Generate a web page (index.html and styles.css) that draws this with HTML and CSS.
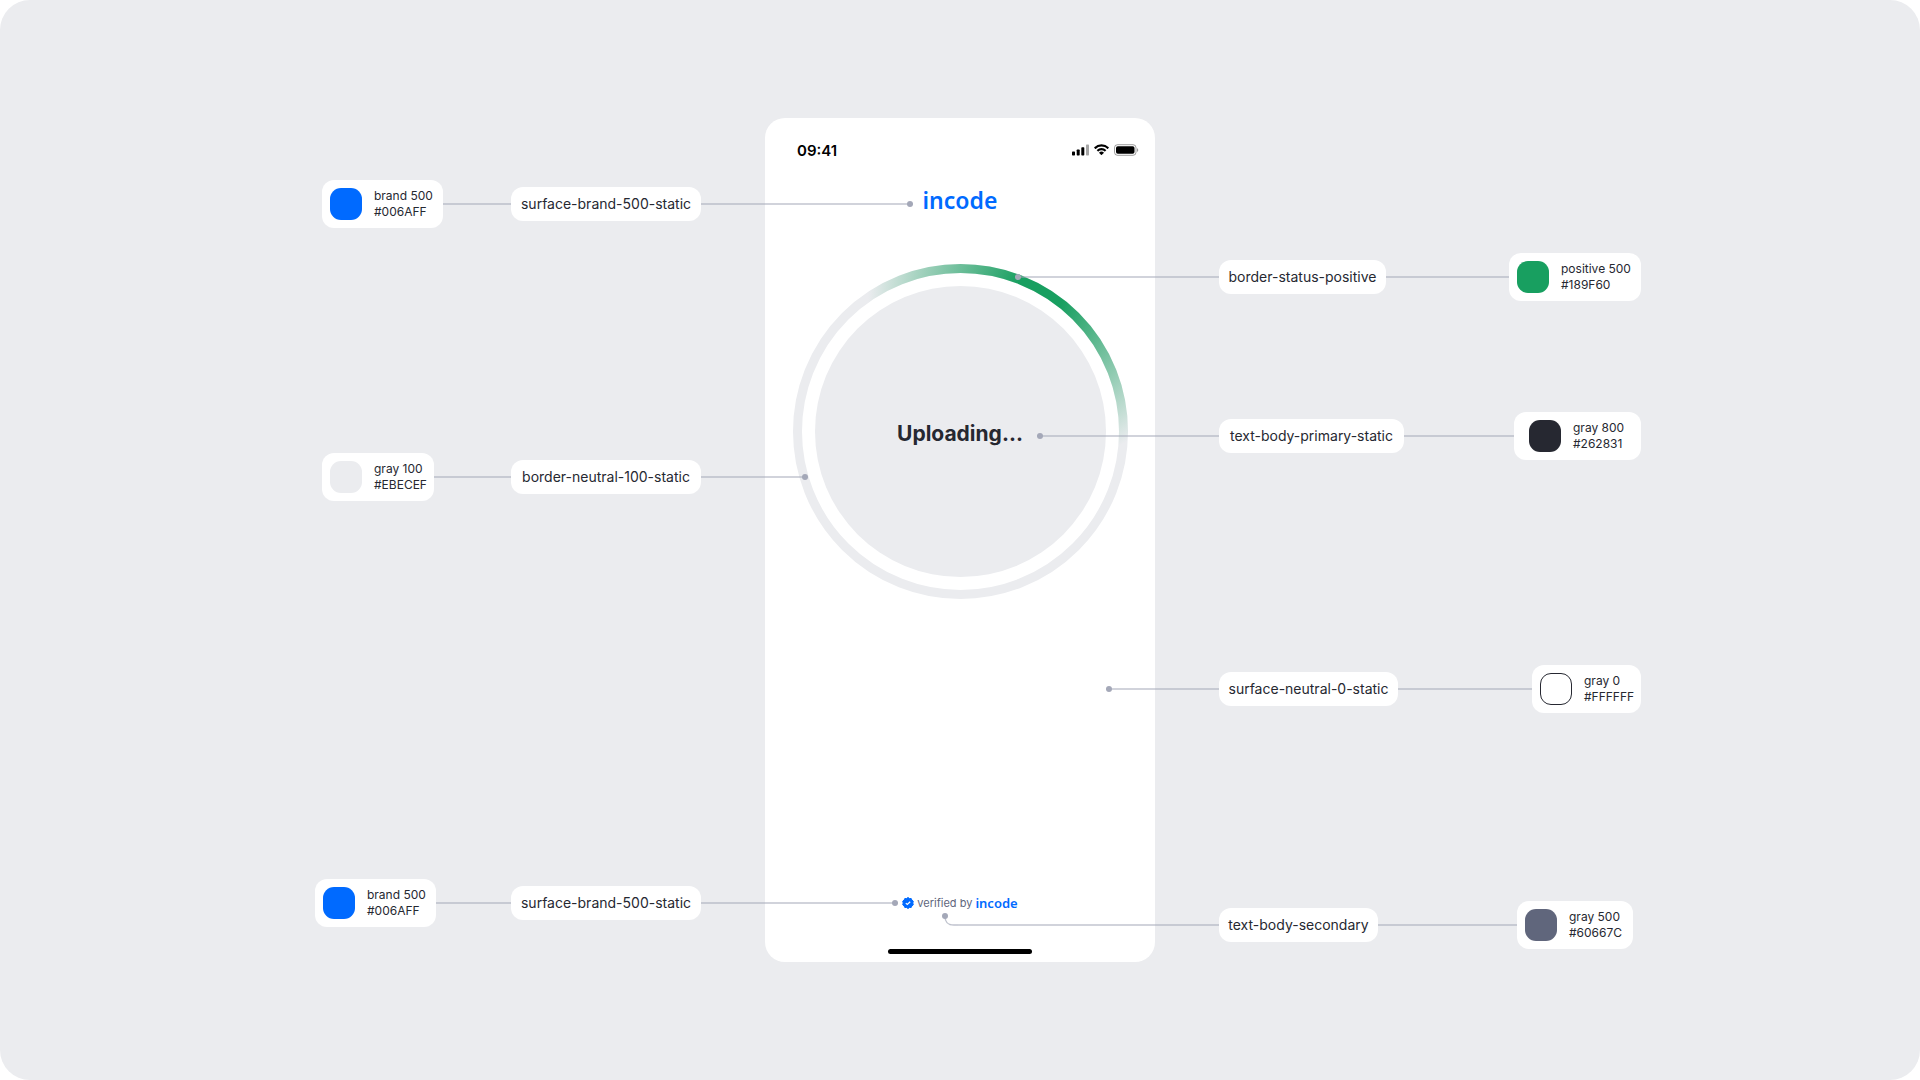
FILE: index.html
```html
<!DOCTYPE html>
<html lang="en">
<head>
<meta charset="utf-8">
<meta name="viewport" content="width=device-width, initial-scale=1">
<title>Incode – Uploading screen color tokens</title>
<link rel="stylesheet" href="styles.css">
</head>
<body>
<main class="board">
  <div class="diagram">
    <section class="phone" aria-label="Uploading screen">
      <header class="status">
        <time class="status-time">09:41</time>
        <svg class="status-icons" width="66" height="12" viewBox="0 0 66 12" aria-hidden="true">
          <rect x="0" y="7.5" width="3" height="4" rx=".7"/>
          <rect x="4.7" y="5.5" width="3" height="6" rx=".7"/>
          <rect x="9.3" y="3.2" width="3" height="8.3" rx=".7"/>
          <rect x="14" y=".5" width="3" height="11" rx=".7" opacity=".35"/>
          <path d="M29.500 2.600c2.100 0 4.200.8 5.800 2.300.1.1.3.1.4 0l1.100-1.200c.1-.1.1-.3 0-.5a10.500 10.500 0 0 0-14.600 0c-.1.1-.1.300 0 .5l1.100 1.200c.1.1.3.1.4 0a8.400 8.400 0 0 1 5.800-2.300zm0 3.700c1.200 0 2.300.4 3.100 1.200.1.1.3.1.4 0l1.200-1.200c.1-.1.1-.3 0-.4a6.800 6.800 0 0 0-9.400 0c-.1.1-.1.300 0 .4l1.200 1.200c.1.1.3.1.4 0 .8-.8 1.900-1.200 3.100-1.200zm2.300 2.700c.1-.1.1-.3 0-.4a3.500 3.500 0 0 0-4.600 0c-.1.1-.1.300 0 .4l2 2.100c.1.1.3.1.4 0z"/>
          <rect x="42.500" y=".7" width="21.500" height="10.600" rx="3" fill="none" stroke="#000" opacity=".38"/>
          <rect x="44" y="2.200" width="18.500" height="7.600" rx="1.800"/>
          <path d="M65 4.200v3.800c.8-.3 1.200-1 1.200-1.900s-.4-1.600-1.200-1.900z" opacity=".4"/>
        </svg>
      </header>
      <div class="logo">incode</div>
      <div class="progress" role="status">
        <svg class="ring" viewBox="0 0 335 335" aria-hidden="true">
          <defs>
            <radialGradient id="arc" gradientUnits="userSpaceOnUse" cx="246" cy="31" r="171">
              <stop offset="0" stop-color="#189F60"/>
              <stop offset=".14" stop-color="#189F60"/>
              <stop offset="1" stop-color="#189F60" stop-opacity="0"/>
            </radialGradient>
          </defs>
          <circle cx="167.500" cy="167.500" r="145.500" fill="#EBECEF"/>
          <circle cx="167.500" cy="167.500" r="163" fill="none" stroke="#EBECEF" stroke-width="9"/>
          <circle cx="167.500" cy="167.500" r="163" fill="none" stroke="url(#arc)" stroke-width="9"/>
        </svg>
        <span class="progress-text">Uploading...</span>
      </div>
      <footer class="verified">
        <svg class="badge" viewBox="0 0 12 12" aria-hidden="true">
          <path fill="#006AFF" stroke="#006AFF" stroke-width="1" stroke-linejoin="round" d="M6 .5 7.500 1.500 9.200 1.500 9.800 3 11.300 4.200 10.800 6 11.300 7.800 9.800 9 9.200 10.500 7.500 10.500 6 11.500 4.500 10.500 2.800 10.500 2.200 9 .7 7.800 1.200 6 .7 4.200 2.200 3 2.800 1.500 4.500 1.500z"/>
          <path fill="none" stroke="#fff" stroke-width="1.200" d="M3.800 6.100 5.300 7.500 8.200 4.700"/>
        </svg>
        <span class="verified-text">verified by</span>
        <span class="verified-logo">incode</span>
      </footer>
      <div class="home-bar"></div>
    </section>

    <div class="note note-logo">
      <div class="chip chip-121"><span class="swatch brand"></span><p>brand 500<br>#006AFF</p></div>
      <span class="line"></span>
      <span class="token">surface-brand-500-static</span>
      <span class="line lead"></span>
    </div>
    <div class="note note-track">
      <div class="chip chip-112"><span class="swatch gray-100"></span><p>gray 100<br>#EBECEF</p></div>
      <span class="line"></span>
      <span class="token">border-neutral-100-static</span>
      <span class="line lead"></span>
    </div>
    <div class="note note-badge">
      <div class="chip chip-121"><span class="swatch brand"></span><p>brand 500<br>#006AFF</p></div>
      <span class="line"></span>
      <span class="token">surface-brand-500-static</span>
      <span class="line lead"></span>
    </div>

    <div class="note right note-arc">
      <span class="line lead"></span>
      <span class="token">border-status-positive</span>
      <span class="line"></span>
      <div class="chip chip-132"><span class="swatch positive"></span><p>positive 500<br>#189F60</p></div>
    </div>
    <div class="note right note-text">
      <span class="line lead"></span>
      <span class="token">text-body-primary-static</span>
      <span class="line"></span>
      <div class="chip chip-127"><span class="swatch gray-800"></span><p>gray 800<br>#262831</p></div>
    </div>
    <div class="note right note-surface">
      <span class="line lead"></span>
      <span class="token">surface-neutral-0-static</span>
      <span class="line"></span>
      <div class="chip chip-109"><span class="swatch gray-0"></span><p>gray 0<br>#FFFFFF</p></div>
    </div>
    <div class="note right note-verified">
      <svg class="elbow" width="16" height="14" viewBox="0 0 16 14" aria-hidden="true">
        <path d="M3 3c0 6 2 9 9 9h4" fill="none" stroke="#A4A8B8" stroke-opacity=".7" stroke-width="1.500"/>
        <circle cx="3" cy="3" r="3" fill="#A4A8B8"/>
      </svg>
      <span class="line lead"></span>
      <span class="token">text-body-secondary</span>
      <span class="line"></span>
      <div class="chip chip-116"><span class="swatch gray-500"></span><p>gray 500<br>#60667C</p></div>
    </div>
  </div>
</main>
</body>
</html>
```
FILE: styles.css
```css
* { box-sizing: border-box; }
body {
  margin: 0;
  background: #fff;
  color: #262831;
  font-family: "Inter", "Liberation Sans", sans-serif;
}
p { margin: 0; }

.board {
  display: flex;
  justify-content: center;
  align-items: center;
  min-width: 1362px;
  min-height: 100vh;
  padding: 32px 0;
  border-radius: 30px;
  background: #EBECEF;
}
.diagram {
  position: relative;
  display: flex;
  justify-content: center;
  width: 1362px;
}

/* phone */
.phone {
  display: flex;
  flex-direction: column;
  align-items: center;
  width: 390px;
  min-height: 844px;
  padding-bottom: 8px;
  border-radius: 20px;
  background: #fff;
}
.status {
  display: flex;
  justify-content: space-between;
  align-items: center;
  align-self: stretch;
  height: 64px;
  padding: 0 17px 0 32px;
  color: #000;
}
.status-time { padding-top: 2px; font-size: 15px; font-weight: 600; line-height: 20px; }
.status-icons { overflow: visible; }
.logo {
  height: 36px;
  margin-bottom: 46px;
  color: #006AFF;
  font-family: "Noto Sans", "Open Sans", sans-serif;
  font-size: 23px;
  font-weight: 600;
  line-height: 36px;
}
.progress {
  display: grid;
  place-items: center;
  width: 335px;
}
.progress > * { grid-area: 1 / 1; }
.ring { display: block; width: 100%; }
.progress-text {
  padding-top: 4px;
  font-size: 21px;
  font-weight: 700;
  line-height: 32px;
}
.verified {
  display: flex;
  align-items: center;
  gap: 3px;
  height: 20px;
  margin-top: auto;
  margin-bottom: 36px;
}
.badge { width: 12px; height: 12px; }
.verified-text { color: #60667C; font-size: 11px; line-height: 20px; }
.verified-logo {
  color: #006AFF;
  font-family: "Noto Sans", "Open Sans", sans-serif;
  font-size: 13px;
  font-weight: 600;
  line-height: 20px;
}
.home-bar { width: 144px; height: 5px; border-radius: 3px; background: #000; }

/* callouts: placed on the canvas, laid out inside by flex */
.note {
  position: absolute;
  display: flex;
  align-items: center;
  height: 48px;
}
.note-logo     { top: 62px;  left: 43px; width: 591px; }
.note-track    { top: 335px; left: 43px; width: 486px; }
.note-badge    { top: 761px; left: 36px; width: 583px; }
.note-arc      { top: 135px; right: 0; width: 626px; }
.note-text     { top: 294px; right: 0; width: 604px; }
.note-surface  { top: 547px; right: 0; width: 535px; }
.note-verified { top: 783px; right: 8px; width: 691px; }

.line { flex: 1; height: 2px; background: rgba(164, 168, 184, .5); }
.lead { position: relative; flex: none; }
.lead::after {
  content: "";
  position: absolute;
  top: -2px;
  right: 0;
  width: 6px;
  height: 6px;
  border-radius: 50%;
  background: #A4A8B8;
}
.right .lead::after { right: auto; left: 0; }
.note-logo .lead { width: 212px; }
.note-track .lead { width: 107px; }
.note-badge .lead { width: 197px; }
.note-arc .lead { width: 204px; }
.note-text .lead { width: 182px; }
.note-surface .lead { width: 113px; }
.note-verified .lead { width: 261px; }
.note-verified .lead::after { display: none; }
.elbow { flex: none; margin-bottom: 10px; }

.token {
  flex: none;
  width: 190px;
  height: 34px;
  border-radius: 12px;
  background: #fff;
  font-size: 14px;
  line-height: 34px;
  text-align: center;
  white-space: nowrap;
}
.note-arc .token { width: 167px; }
.note-text .token { width: 185px; }
.note-surface .token { width: 179px; }
.note-verified .token { width: 159px; }

.chip {
  display: flex;
  align-items: center;
  flex: none;
  gap: 12px;
  height: 48px;
  padding-left: 8px;
  border-radius: 12px;
  background: #fff;
  font-size: 12px;
  line-height: 16px;
  white-space: nowrap;
}
.chip-109 { width: 109px; }
.chip-112 { width: 112px; }
.chip-116 { width: 116px; }
.chip-121 { width: 121px; }
.chip-127 { width: 127px; padding-left: 15px; }
.chip-132 { width: 132px; }
.swatch { flex: none; width: 32px; height: 32px; border-radius: 11px; }
.brand { background: #006AFF; }
.positive { background: #189F60; }
.gray-0 { background: #fff; border: 1px solid #262831; }
.gray-100 { background: #EBECEF; }
.gray-500 { background: #60667C; }
.gray-800 { background: #262831; }
```
